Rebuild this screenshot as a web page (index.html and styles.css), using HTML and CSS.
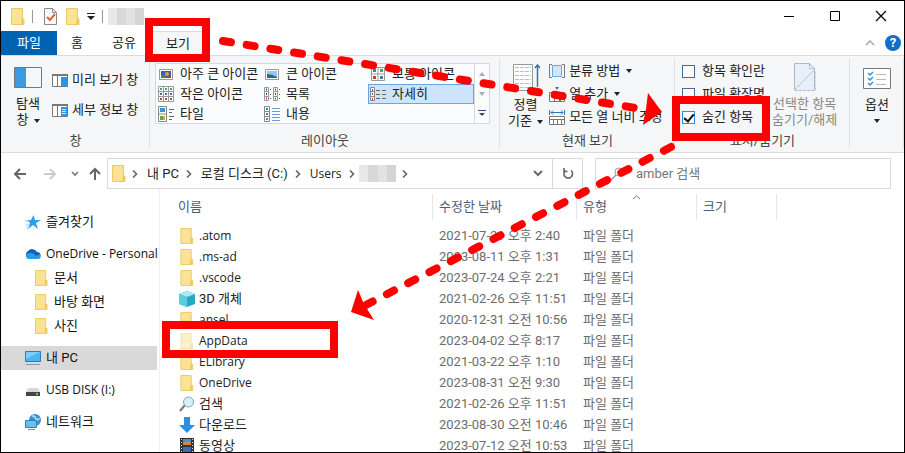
FILE: index.html
```html
<!DOCTYPE html>
<html lang="ko">
<head>
<meta charset="utf-8">
<title>파일 탐색기</title>
<link rel="stylesheet" href="styles.css">
</head>
<body>
<svg class="defs" aria-hidden="true">
  <symbol id="folder" viewBox="0 0 14 17"><path d="M.5.5h11v10.500h1.500v5.500H.5z" fill="#fbe294" stroke="#eccb62"/><path d="M10.500 16v-4.500l2-1V16z" fill="#f0c850"/></symbol>
  <symbol id="chev" viewBox="0 0 8 8"><path d="M2 .5 5.500 4 2 7.500" fill="none" stroke="#666" stroke-width="1.600"/></symbol>
  <symbol id="down" viewBox="0 0 6 4"><path d="M0 0h6L3 4z" fill="#222"/></symbol>
</svg>
<div class="window">
  <header class="titlebar">
    <svg class="folder-lg"><use href="#folder"/></svg>
    <i class="bar"></i>
    <button class="quick props" aria-label="속성"><svg width="13" height="17"><path d="M.5.5h8l4 4v12H.5z" fill="#fafafa" stroke="#888"/><path d="M8.500.5v4h4" fill="none" stroke="#888"/><path d="M3 9l3 3 5-6" fill="none" stroke="#e8622c" stroke-width="2"/></svg></button>
    <button class="quick" aria-label="새 폴더"><svg class="folder-lg"><use href="#folder"/></svg></button>
    <button class="quick more" aria-label="사용자 지정"><svg width="8" height="7"><path d="M0 .5h8" stroke="#222"/><path d="M0 3h8L4 7z" fill="#222"/></svg></button>
    <i class="bar"></i>
    <span class="masked title-mask"></span>
    <div class="controls">
      <button aria-label="최소화"><svg width="12" height="12"><path d="M1 6.500h10" stroke="#000"/></svg></button>
      <button aria-label="최대화"><svg width="12" height="12"><path d="M1.500 1.500h9v9h-9z" fill="none" stroke="#000"/></svg></button>
      <button aria-label="닫기"><svg width="12" height="12"><path d="M1 1l10 10M11 1 1 11" stroke="#000" stroke-width="1.200"/></svg></button>
    </div>
  </header>

  <nav class="tabs">
    <button class="tab file">파일</button><button class="tab home">홈</button><button class="tab">공유</button><button class="tab active">보기</button>
    <div class="tab-tools">
      <button aria-label="리본 최소화"><svg width="10" height="6"><path d="M1 5l4-4 4 4" fill="none" stroke="#aaa" stroke-width="1.600"/></svg></button>
      <button class="help" aria-label="도움말">?</button>
    </div>
  </nav>

  <section class="ribbon">
    <div class="group">
      <div class="body panes">
        <button class="big"><svg width="28" height="21"><path d="M.5.5h27v20H.5z" fill="#f2f8fd" stroke="#777"/><path d="M1 1h11v19H1z" fill="#3a9be3"/></svg><span>탐색</span><span>창 <svg class="drop"><use href="#down"/></svg></span></button>
        <div class="stack wide">
          <button class="cmd"><svg width="16" height="13"><path d="M.5.5h15v12H.5zM5.500 2v10" fill="#fff" stroke="#777"/><path d="M0 1h16" stroke="#777" stroke-width="2"/><path d="M9 3h6v9H9z" fill="#2e93e0"/></svg>미리 보기 창</button>
          <button class="cmd"><svg width="16" height="13"><path d="M.5.5h15v12H.5zM5.500 2v10" fill="#fff" stroke="#777"/><path d="M0 1h16" stroke="#777" stroke-width="2"/><path d="M9 3h6v9H9z" fill="#2e93e0"/><path d="M10 5.500h4M10 7.500h4M10 9.500h4" stroke="#cfe8fa"/></svg>세부 정보 창</button>
        </div>
      </div>
      <div class="caption">창</div>
    </div>

    <div class="group">
      <div class="body">
        <div class="gallery">
          <div class="views">
            <button><svg width="16" height="16"><path d="M1.500 3.500h13v10h-13z" fill="#fff" stroke="#999"/><path d="M3 5h10v7H3z" fill="#2f5fc0"/><path d="M3 9h5v3H3z" fill="#3b8b45"/><circle cx="9" cy="8" r="2" fill="#e3a32c"/><path d="M9 10h4v2H9z" fill="#b33a2d"/></svg>아주 큰 아이콘</button>
            <button><svg width="16" height="16"><path d="M1.500 3.500h13v10h-13z" fill="#fff" stroke="#999"/><path d="M3 5h10v7H3z" fill="#93c6f0"/><path d="M3 8q5 0 10 3v1H3z" fill="#2d6a78"/></svg>큰 아이콘</button>
            <button><svg width="16" height="16"><path d="M1.500 1.500h13v13h-13zM8 1v14M1 8h14" fill="#fff" stroke="#999"/><path d="M3 3h3v3H3z" fill="#2d8ad0"/><path d="M10 3h3v3h-3z" fill="#55a350"/><path d="M3 10h3v3H3z" fill="#c83d35"/><path d="M10 10h3v3h-3z" fill="#3978b8"/></svg>보통 아이콘</button>
            <button><svg width="16" height="16"><path d="M.5.5h15v15H.5zM5.500 0v16M10.500 0v16M0 5.500h16M0 10.500h16" fill="#fff" stroke="#999"/><path d="M2 3h2M7 3h2M12 3h2" stroke="#4a9a8a" stroke-width="2"/><path d="M2 8h2M7 8h2M12 8h2" stroke="#486f9f" stroke-width="2"/><path d="M2 13h2M7 13h2M12 13h2" stroke="#a54" stroke-width="2"/></svg>작은 아이콘</button>
            <button><svg width="16" height="16"><path d="M.5 1.500h4v13h-4zM9.500 1.500h4v13h-4zM0 5.500h5M0 10.500h5M9 5.500h5M9 10.500h5" fill="#fff" stroke="#999"/><path d="M2 3.500h1M2 8h1M11 3.500h1M11 8h1" stroke="#258" stroke-width="2"/><path d="M2 12.500h1M11 12.500h1" stroke="#c33" stroke-width="2"/><path d="M6 3.500h1M6 8.500h1M6 12.500h1M15 3.500h1M15 8.500h1M15 12.500h1" stroke="#666"/></svg>목록</button>
            <button class="selected" aria-pressed="true"><svg width="16" height="16"><path d="M.5 1.500h4v13h-4zM0 5.500h5M0 10.500h5" fill="#fff" stroke="#888"/><path d="M2.500 3v2M2.500 7v2" stroke="#369"/><path d="M2.500 12v2" stroke="#c33"/><path d="M6 4.500h4M12 4.500h4M6 8.500h4M12 8.500h4M6 12.500h4M12 12.500h4" stroke="#666"/></svg>자세히</button>
            <button><svg width="16" height="16"><path d="M.5.5h8v15h-8zM0 8h8" fill="#fff" stroke="#888"/><path d="M2 2h5v4H2z" fill="#4293d3"/><path d="M2 10h3v4H2z" fill="#59a84c"/><path d="M5 10h2v4H5z" fill="#e1a53b"/><path d="M11 3.500h5M11 6.500h3M11 10.500h5M11 13.500h3" stroke="#666"/></svg>타일</button>
            <button><svg width="16" height="16"><path d="M.5.5h5v15h-5zM0 5.500h6M0 10.500h6" fill="#fff" stroke="#888"/><path d="M2 3h2M2 13h2" stroke="#378bc8" stroke-width="2"/><path d="M2 8h2" stroke="#49904a" stroke-width="2"/><path d="M8 2.500h8M8 5.500h8M8 8.500h8M8 11.500h8M8 14.500h8" stroke="#6b9bd8"/></svg>내용</button>
          </div>
          <div class="spin">
            <button aria-label="위로"><svg width="6" height="4"><path d="M0 4h6L3 0z" fill="#aab"/></svg></button>
            <button aria-label="아래로"><svg width="6" height="4"><path d="M0 0h6L3 4z" fill="#aab"/></svg></button>
            <button aria-label="자세히 보기"><svg width="8" height="7"><path d="M0 .5h8" stroke="#34496b"/><path d="M1 3h6L4 6z" fill="#34496b"/></svg></button>
          </div>
        </div>
      </div>
      <div class="caption">레이아웃</div>
    </div>

    <div class="group">
      <div class="body current">
        <button class="big"><svg width="28" height="28"><path d="M1.500.5h19v26h-19z" fill="#fff" stroke="#999"/><path d="M3 3.500h16M3 7.500h16M3 11.500h16M3 15.500h16M3 19.500h16M3 23.500h16" stroke="#9ac9e8" stroke-dasharray="4 1"/><path d="M25.500 1v22" stroke="#2878bd" stroke-width="1.500"/><path d="M23 4l2.500-3L28 4" fill="none" stroke="#2878bd" stroke-width="1.500"/></svg><span>정렬</span><span>기준 <svg class="drop"><use href="#down"/></svg></span></button>
        <div class="stack">
          <button class="cmd"><svg width="16" height="14"><path d="M3.500 1.500h9v11h-9z" fill="#cfe7fa" stroke="#64a9df"/><path d="M3 .5H.5v13H3M13 .5h2.500v13H13" fill="none" stroke="#777"/></svg>분류 방법 <svg class="drop"><use href="#down"/></svg></button>
          <button class="cmd"><svg width="16" height="15"><path d="M.5 5.500h15v9H.5zM5.500 5v10M10.500 5v10" fill="#fff" stroke="#777"/><path d="M6 0h4L8 3z" fill="#2878bd"/><path d="M8 11h6M11 8v6" stroke="#23a33a" stroke-width="2"/></svg>열 추가 <svg class="drop"><use href="#down"/></svg></button>
          <button class="cmd"><svg width="16" height="15"><path d="M.5 6.500h15v8H.5zM0 9.500h16M4.500 9v6M8.500 9v6M12.500 9v6" fill="#fff" stroke="#777"/><path d="M.5 0v5M15.500 0v5M2 2.500h12M4 .5l-2 2 2 2M12 .5l2 2-2 2" fill="none" stroke="#2878bd"/></svg>모든 열 너비 조정</button>
        </div>
      </div>
      <div class="caption">현재 보기</div>
    </div>

    <div class="group">
      <div class="body show">
        <div class="stack">
          <label><input type="checkbox">항목 확인란</label>
          <label><input type="checkbox">파일 확장명</label>
          <label><input type="checkbox" checked>숨긴 항목</label>
        </div>
        <button class="big disabled" disabled><svg width="22" height="28"><path d="M.5 27V.5h15l5 5V27" fill="#e8eff8" stroke="#a9b9d0"/><path d="M15.500.5v5h5M.5 27 20 7M1 27.500h20V8" fill="none" stroke="#a9b9d0" stroke-dasharray="3 1"/></svg><span>선택한 항목</span><span>숨기기/해제</span></button>
      </div>
      <div class="caption">표시/숨기기</div>
    </div>

    <div class="group options">
      <div class="body">
        <button class="big"><svg width="28" height="21"><path d="M.5.5h27v20H.5z" fill="#fff" stroke="#777"/><path d="M5 5l2 2 3-3M5 10l2 2 3-3M5 15l2 2 3-3" fill="none" stroke="#2e93e0" stroke-width="1.500"/><path d="M13 6.500h10M13 11.500h10M13 16.500h10" stroke="#bbb"/></svg><span>옵션</span><svg class="drop"><use href="#down"/></svg></button>
      </div>
    </div>
  </section>

  <div class="location">
    <div class="travel">
      <button aria-label="뒤로"><svg width="14" height="12"><path d="M13 6H2M7 1 2 6l5 5" fill="none" stroke="#666" stroke-width="2"/></svg></button>
      <button aria-label="앞으로"><svg width="14" height="12"><path d="M1 6h11M7 1l5 5-5 5" fill="none" stroke="#ccc" stroke-width="2"/></svg></button>
      <button class="small" aria-label="최근 위치"><svg width="8" height="6"><path d="M1 1l3 3 3-3" fill="none" stroke="#777" stroke-width="1.600"/></svg></button>
      <button class="small" aria-label="위로"><svg width="12" height="13"><path d="M6 13V2M1 7l5-5 5 5" fill="none" stroke="#666" stroke-width="2"/></svg></button>
    </div>
    <div class="address">
      <svg class="folder-lg"><use href="#folder"/></svg>
      <svg class="chev"><use href="#chev"/></svg><a href="#pc">내 PC</a>
      <svg class="chev"><use href="#chev"/></svg><a href="#c">로컬 디스크 (C:)</a>
      <svg class="chev"><use href="#chev"/></svg><a href="#users" class="latin">Users</a>
      <svg class="chev"><use href="#chev"/></svg><span class="masked path-mask"></span>
      <svg class="chev"><use href="#chev"/></svg>
      <button class="history" aria-label="이전 위치"><svg width="10" height="7"><path d="M1 1l4 4 4-4" fill="none" stroke="#666" stroke-width="2"/></svg></button>
      <button class="refresh" aria-label="새로 고침"><svg width="12" height="13"><path d="M3.500 3.500a4.300 4.300 0 1 0 5.500 0M2 1v3.500h3.500" fill="none" stroke="#666" stroke-width="1.600"/></svg></button>
    </div>
    <label class="search"><svg width="14" height="14"><circle cx="9" cy="5" r="4" fill="none" stroke="#999"/><path d="M6 8l-5 5" stroke="#999" stroke-width="1.500"/></svg><input type="search" placeholder="amber 검색" aria-label="amber 검색"></label>
  </div>

  <main class="content">
    <nav class="tree">
      <a href="#fav"><svg width="16" height="16"><path d="M8.500 1l1.500 5h6l-5 3 2 6-5-4-5 4 2-6-3-3h4z" fill="#2d9fe8"/><path d="M0 7h5M1 11h4M1 14h2" stroke="#8fcdf5"/></svg>즐겨찾기</a>
      <a class="gap latin" href="#od"><svg width="16" height="16"><path d="M3 12a4 4 0 0 1 0-7 5.500 5.500 0 0 1 9 1 3 3 0 0 1 1 6z" fill="#0d62b8"/><path d="M1 9q5-5 10 1l4-2q2 5-2 5H4q-3 0-3-4z" fill="#2b9be8"/></svg>OneDrive - Personal</a>
      <a class="child" href="#doc"><svg class="folder-sm"><use href="#folder"/></svg>문서</a>
      <a class="child" href="#desk"><svg class="folder-sm"><use href="#folder"/></svg>바탕 화면</a>
      <a class="child" href="#pic"><svg class="folder-sm"><use href="#folder"/></svg>사진</a>
      <a class="gap current-place" href="#pc"><svg width="16" height="16"><path d="M.5 1.500h15v10H.5z" fill="#49b4f3" stroke="#2b80b8"/><path d="M1 2h14L1 9z" fill="#7dcdf8"/><path d="M1 14.500h14" stroke="#8298ac"/></svg>내 PC</a>
      <a class="gap latin" href="#usb"><svg width="16" height="16"><path d="M3 6h10l2 4H1z" fill="#d8d8d8"/><path d="M1 10h14v4H1z" fill="#444"/><path d="M11 12h2" stroke="#5bd06a" stroke-width="2"/></svg>USB DISK (I:)</a>
      <a class="gap" href="#net"><svg width="16" height="16"><circle cx="10" cy="6" r="6" fill="#3a8fc9"/><path d="M7 2q4 0 4 4M10 8q4-4 5-3" fill="none" stroke="#9ad5ee" stroke-width="2"/><path d="M.5 6.500h11v7H.5z" fill="#62c2f4" stroke="#2b80b8"/><path d="M3 15.500h7" stroke="#789"/></svg>네트워크</a>
    </nav>
    <div class="files">
      <table>
        <colgroup><col class="c-name"><col class="c-date"><col class="c-type"><col class="c-size"><col></colgroup>
        <thead><tr><th><div>이름</div></th><th><div>수정한 날짜</div></th><th class="sorted"><div>유형</div><svg class="sort" width="9" height="5"><path d="M1 4l3.500-3L8 4" fill="none" stroke="#777"/></svg></th><th><div>크기</div></th><th><div></div></th></tr></thead>
        <tbody>
          <tr><td class="latin"><svg class="fi"><use href="#folder"/></svg>.atom</td><td>2021-07-21 오후 2:40</td><td>파일 폴더</td><td></td><td></td></tr>
          <tr><td class="latin"><svg class="fi"><use href="#folder"/></svg>.ms-ad</td><td>2023-08-11 오후 1:31</td><td>파일 폴더</td><td></td><td></td></tr>
          <tr><td class="latin"><svg class="fi"><use href="#folder"/></svg>.vscode</td><td>2023-07-24 오후 2:21</td><td>파일 폴더</td><td></td><td></td></tr>
          <tr><td><svg class="fi" viewBox="0 0 16 16"><path d="M8 0l8 3v10l-8 3-8-3V3z" fill="#27a9c4"/><path d="M8 0l8 3-8 3-8-3z" fill="#a7ebf3"/><path d="M0 3l8 3v10l-8-3z" fill="#58cfe0"/></svg>3D 개체</td><td>2021-02-26 오후 11:51</td><td>파일 폴더</td><td></td><td></td></tr>
          <tr><td class="latin"><svg class="fi"><use href="#folder"/></svg>ansel</td><td>2020-12-31 오전 10:56</td><td>파일 폴더</td><td></td><td></td></tr>
          <tr class="hidden-item"><td class="latin"><svg class="fi"><use href="#folder"/></svg>AppData</td><td>2023-04-02 오후 8:17</td><td>파일 폴더</td><td></td><td></td></tr>
          <tr><td class="latin"><svg class="fi"><use href="#folder"/></svg>ELibrary</td><td>2021-03-22 오후 1:10</td><td>파일 폴더</td><td></td><td></td></tr>
          <tr><td class="latin"><svg class="fi"><use href="#folder"/></svg>OneDrive</td><td>2023-08-31 오전 9:30</td><td>파일 폴더</td><td></td><td></td></tr>
          <tr><td><svg class="fi" viewBox="0 0 16 16"><path d="M6 9l-5 6" stroke="#777" stroke-width="2"/><circle cx="9.500" cy="6" r="5" fill="#d5effc" stroke="#85a5b8"/></svg>검색</td><td>2021-02-26 오후 11:51</td><td>파일 폴더</td><td></td><td></td></tr>
          <tr><td><svg class="fi" viewBox="0 0 16 16"><path d="M5 0h6v8h5l-8 8-8-8h5z" fill="#2f8fe0"/></svg>다운로드</td><td>2023-08-30 오전 10:46</td><td>파일 폴더</td><td></td><td></td></tr>
          <tr><td><svg class="fi" viewBox="0 0 16 16"><path d="M1 0h14v16H1z" fill="#333"/><path d="M4 1h8v6H4z" fill="#4d8bc9"/><path d="M4 5q4-4 8 0v2H4z" fill="#c98c3a"/><path d="M4 9h8v6H4z" fill="#3a6fb4"/><path d="M2.500 1v15M13.500 1v15" stroke="#ddd" stroke-dasharray="1 2"/></svg>동영상</td><td>2023-07-12 오전 10:53</td><td>파일 폴더</td><td></td><td></td></tr>
        </tbody>
      </table>
    </div>
  </main>
</div>
<svg class="marks" width="905" height="453" aria-hidden="true">
  <g fill="none" stroke="#f00" stroke-width="8">
    <rect x="149" y="22" width="57" height="36"/>
    <rect x="676" y="100" width="90" height="37"/>
    <rect x="166" y="325" width="168" height="29"/>
    <path d="M223 41 636 108M671 147 366 305" stroke-linecap="round" stroke-dasharray="8 16"/>
  </g>
  <path d="M648 93l14 19-19 13 3-16zM351 312l7-22 6 14 10 16z" fill="#f00"/>
</svg>
</body>
</html>
```

FILE: styles.css
```css
* { box-sizing: border-box; }
body {
  margin: 0;
  height: 100vh;
  overflow: hidden;
  font: 13px/16px Roboto, "Noto Sans CJK KR", sans-serif;
  color: #222;
  background: #fff;
}
button {
  font: inherit;
  color: inherit;
  background: none;
  border: 0;
  padding: 0;
  display: flex;
  align-items: center;
  white-space: nowrap;
}
a { color: inherit; text-decoration: none; white-space: nowrap; }
svg { flex: none; }
.latin { font-family: "Open Sans", "Noto Sans CJK KR", sans-serif; font-size: 12px; }
.defs { position: absolute; width: 0; height: 0; }
.marks { position: absolute; top: 0; left: 0; pointer-events: none; }
.window {
  height: 100vh;
  border: 1px solid #000;
  display: flex;
  flex-direction: column;
  overflow: hidden;
}
.folder-lg { width: 14px; height: 17px; }
.drop { width: 6px; height: 4px; margin-left: 2px; vertical-align: middle; }
.masked {
  background: linear-gradient(90deg, #e8e8e8 0 25%, #d8d8d8 25% 50%, #e2e2e2 50% 75%, #d4d4d4 75%);
}

.titlebar { display: flex; align-items: center; height: 30px; padding-left: 10px; flex: none; }
.bar { width: 1px; height: 13px; background: #999; margin: 0 11px 0 7px; }
.quick { margin-right: 9px; }
.more { margin: 0 0 0 -2px; }
.title-mask { width: 36px; height: 17px; margin-left: -6px; }
.controls { display: flex; margin-left: auto; }
.controls button { width: 46px; height: 30px; justify-content: center; }

.tabs { display: flex; height: 24px; flex: none; }
.tab { width: 54px; justify-content: center; }
.tab.file { width: 56px; background: #0063b1; color: #fff; }
.tab.home { width: 40px; }
.tab.active { background: #f5f6f7; border: 1px solid #ddd; border-bottom: 0; }
.tab-tools { display: flex; align-items: center; gap: 10px; margin-left: auto; padding-right: 3px; }
.help {
  width: 16px;
  height: 16px;
  border-radius: 50%;
  background: #1070c8;
  color: #fff;
  font-weight: 700;
  justify-content: center;
}

.ribbon {
  display: grid;
  grid-template-columns: 149px 350px 175px 175px 1fr;
  height: 98px;
  flex: none;
  background: #f5f6f7;
  border: solid #dadbdc;
  border-width: 1px 0;
}
.group { display: flex; flex-direction: column; min-width: 0; padding-bottom: 3px; position: relative; }
.group::after {
  content: "";
  position: absolute;
  right: 0;
  top: 2px;
  bottom: 4px;
  width: 1px;
  background: #e0e1e2;
}
.body { display: flex; flex: 1; align-items: flex-start; padding: 7px 5px 0; }
.caption { text-align: center; color: #444; }
.big { flex-direction: column; }
.big > svg:first-child { margin-bottom: 5px; }
.panes .big { padding: 4px 8px 0; margin-right: 2px; }
.panes .big > svg:first-child { margin-bottom: 8px; }
.stack { display: flex; flex-direction: column; gap: 7px; }
.stack.wide { gap: 14px; }
.cmd { height: 16px; gap: 4px; }
.panes .stack { padding-top: 9px; }
.gallery { display: flex; width: 335px; height: 61px; border: 1px solid #d5d8dc; background: #fbfcfd; }
.views {
  display: grid;
  grid-template-columns: 106px 106px 106px;
  grid-auto-rows: 20px;
  flex: 1;
}
.views button { gap: 6px; padding-left: 2px; }
.views .selected { background: #cce4fc; border: 1px solid #66a7e8; padding-left: 1px; }
.spin { display: flex; flex-direction: column; width: 15px; border-left: 1px solid #d5d8dc; }
.spin button { flex: 1; justify-content: center; }
.current { padding-left: 8px; }
.current .big { margin-right: 6px; }
.current .big > svg:first-child { margin-top: 1px; }
.show { padding-left: 7px; }
.show label { display: flex; align-items: center; gap: 7px; height: 16px; white-space: nowrap; }
.show input {
  appearance: none;
  position: relative;
  width: 13px;
  height: 13px;
  margin: 0;
  border: 1px solid #4a6c94;
  background: #fff;
}
.show input:checked { border-color: #2f8de4; }
.show input:checked::after {
  content: "";
  position: absolute;
  left: 3px;
  top: 0;
  width: 4px;
  height: 8px;
  border: solid #111;
  border-width: 0 2px 2px 0;
  transform: rotate(40deg);
}
.show .big { margin-left: 7px; }
.disabled { color: #888; }
.options .body { justify-content: center; padding-top: 12px; }
.options .big > svg:first-child { margin-bottom: 8px; }
.options .drop { margin: 6px 0 0; }

.location { display: flex; height: 36px; padding: 5px 13px 0 0; flex: none; align-items: center; }
.travel { display: flex; align-items: center; width: 106px; padding-left: 4px; }
.travel button { width: 30px; justify-content: center; }
.travel .small { width: 20px; }
.address {
  display: flex;
  align-items: center;
  flex: 0 1 476px;
  height: 31px;
  border: 1px solid #d9d9d9;
  padding-left: 4px;
}
.address a { margin-right: 6px; }
.chev { width: 8px; height: 8px; margin: 0 8px 0 5px; }
.address a + .chev { margin-left: 0; }
.path-mask { width: 37px; height: 17px; margin: 0 0 0 -5px; }
.history { margin-left: auto; width: 28px; justify-content: center; }
.refresh { width: 30px; height: 100%; border-left: 1px solid #d9d9d9; justify-content: center; }
.search {
  display: flex;
  align-items: center;
  flex: 1;
  height: 31px;
  margin-left: 12px;
  padding-left: 14px;
  gap: 12px;
  border: 1px solid #d9d9d9;
}
.search input { flex: 1; min-width: 0; border: 0; padding: 0; outline: 0; font: inherit; background: none; }
.search input::placeholder { color: #767676; opacity: 1; }

.content { display: flex; flex: 1; min-height: 0; }
.tree { width: 156px; padding-top: 21px; flex: none; }
.tree a { display: flex; align-items: center; gap: 5px; height: 24px; padding-left: 24px; color: #111; }
.tree .gap { margin-top: 8px; }
.tree .child { padding-left: 34px; gap: 6px; }
.tree .current-place { background: #d9d9d9; }
.folder-sm { width: 13px; height: 16px; }
.files { flex: 1; margin-left: 2px; border-left: 1px solid #f0f0f0; overflow: hidden; }
table { width: 100%; table-layout: fixed; border-collapse: collapse; color: #6d6d6d; }
.c-name { width: 272px; }
.c-date { width: 144px; }
.c-type { width: 120px; }
.c-size { width: 80px; }
th { height: 36px; padding: 0; font-weight: 400; text-align: left; color: #4c607a; }
th div { height: 26px; line-height: 26px; padding-left: 6px; border-left: 1px solid #e5e5e5; }
th:first-child div { padding-left: 18px; border: 0; }
.sorted { position: relative; }
.sort { position: absolute; top: 6px; left: 56px; }
td { height: 21px; padding: 0 0 0 7px; white-space: nowrap; }
td:first-child { display: flex; align-items: center; gap: 4px; padding-left: 19px; color: #222; }
.fi { width: 16px; height: 16px; }
.hidden-item .fi { opacity: .5; }
```
